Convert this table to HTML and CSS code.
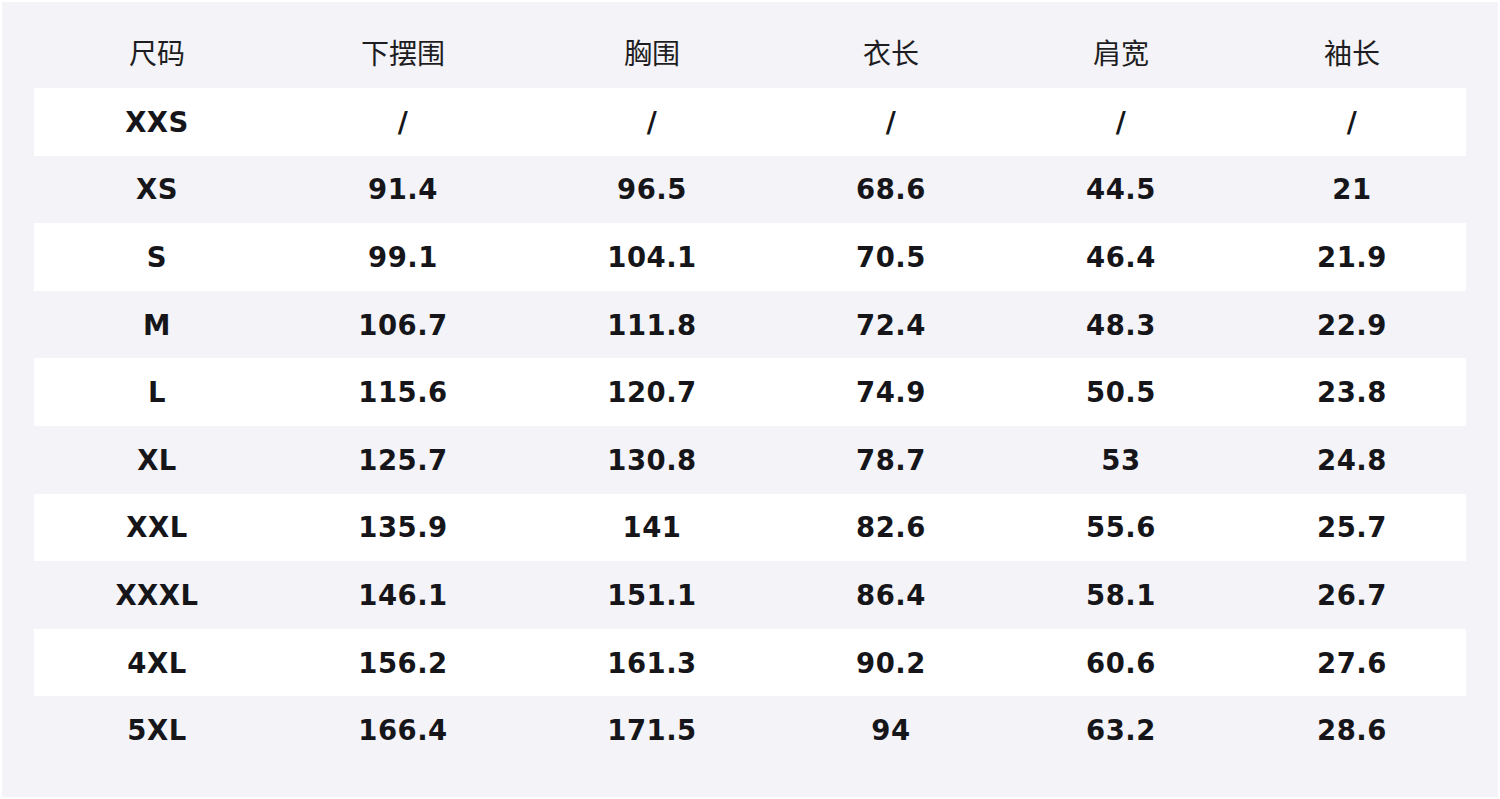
FILE: index.html
```html
<!DOCTYPE html>
<html lang="zh">
<head>
<meta charset="utf-8">
<link rel="stylesheet" href="styles.css">
</head>
<body>
<div class="frame">
  <div class="table">
    <div class="row head"><div>尺码</div><div>下摆围</div><div>胸围</div><div>衣长</div><div>肩宽</div><div>袖长</div></div>
    <div class="row odd"><div>XXS</div><div>/</div><div>/</div><div>/</div><div>/</div><div>/</div></div>
    <div class="row"><div>XS</div><div>91.4</div><div>96.5</div><div>68.6</div><div>44.5</div><div>21</div></div>
    <div class="row odd"><div>S</div><div>99.1</div><div>104.1</div><div>70.5</div><div>46.4</div><div>21.9</div></div>
    <div class="row"><div>M</div><div>106.7</div><div>111.8</div><div>72.4</div><div>48.3</div><div>22.9</div></div>
    <div class="row odd"><div>L</div><div>115.6</div><div>120.7</div><div>74.9</div><div>50.5</div><div>23.8</div></div>
    <div class="row"><div>XL</div><div>125.7</div><div>130.8</div><div>78.7</div><div>53</div><div>24.8</div></div>
    <div class="row odd"><div>XXL</div><div>135.9</div><div>141</div><div>82.6</div><div>55.6</div><div>25.7</div></div>
    <div class="row"><div>XXXL</div><div>146.1</div><div>151.1</div><div>86.4</div><div>58.1</div><div>26.7</div></div>
    <div class="row odd"><div>4XL</div><div>156.2</div><div>161.3</div><div>90.2</div><div>60.6</div><div>27.6</div></div>
    <div class="row"><div>5XL</div><div>166.4</div><div>171.5</div><div>94</div><div>63.2</div><div>28.6</div></div>
  </div>
</div>
</body>
</html>
```

FILE: styles.css
```css
html, body {
  margin: 0;
  padding: 0;
  background: #ffffff;
}
.frame {
  margin: 2px;
  width: 1496px;
  height: 795px;
  box-sizing: border-box;
  background: #f3f3f8;
  padding: 18px 32px 0 32px;
}
.table {
  display: flex;
  flex-direction: column;
}
.row {
  display: grid;
  grid-template-columns: 246px 246px 252px 226px 234px 228px;
  height: 67.6px;
  align-items: center;
  text-align: center;
  font-family: "DejaVu Sans", "Noto Sans CJK SC", sans-serif;
  font-weight: bold;
  font-size: 27.5px;
  letter-spacing: 0.5px;
  color: #16161a;
}
.row.head {
  height: 68px;
  padding-bottom: 4px;
  box-sizing: border-box;
  font-family: "Noto Sans CJK SC", sans-serif;
  font-weight: normal;
  font-size: 28px;
  letter-spacing: 0;
  color: #1e1e22;
}
.row.odd {
  background: #ffffff;
}
```
